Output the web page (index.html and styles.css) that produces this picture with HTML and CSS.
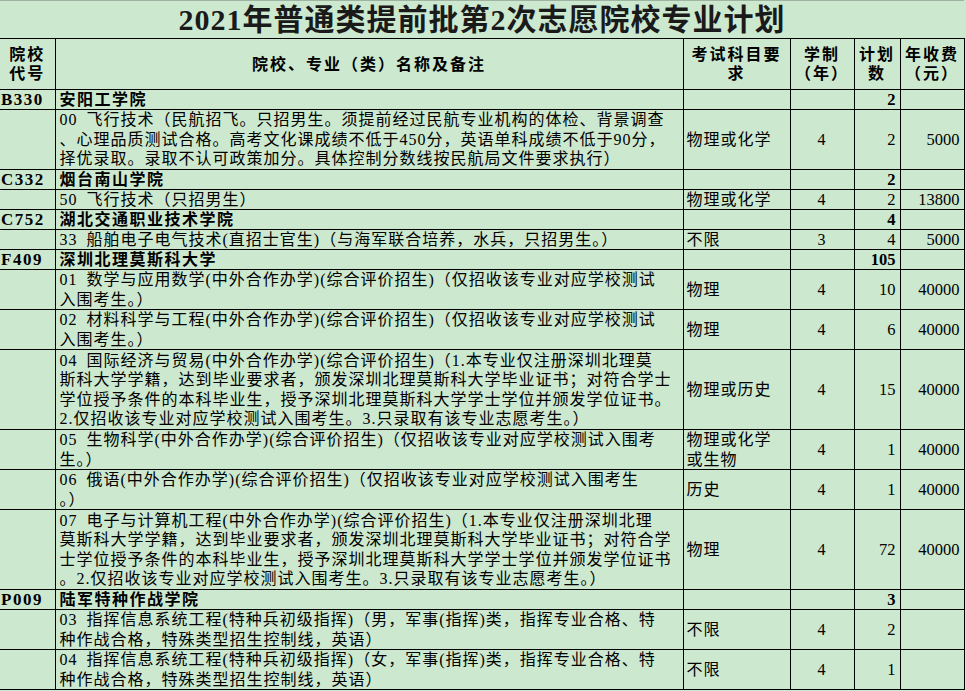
FILE: index.html
```html
<!DOCTYPE html>
<html lang="zh-CN">
<head>
<meta charset="utf-8">
<title>2021年普通类提前批第2次志愿院校专业计划</title>
<link rel="stylesheet" href="styles.css">
</head>
<body>
<table class="plan">
  <colgroup>
    <col class="c-code"><col class="c-name"><col class="c-subj"><col class="c-yr"><col class="c-plan"><col class="c-fee">
  </colgroup>
  <tr class="title-row"><td class="title" colspan="6">2021年普通类提前批第2次志愿院校专业计划</td></tr>
  <tr class="head-row">
    <th class="code">院校<br>代号</th>
    <th>院校、专业（类）名称及备注</th>
    <th>考试科目要<br>求</th>
    <th>学制<br>（年）</th>
    <th>计划<br>数</th>
    <th>年收费<br>（元）</th>
  </tr>

  <tr class="group h1"><td class="code">B330</td><td class="name">安阳工学院</td><td class="subj"></td><td class="yr"></td><td class="num">2</td><td class="num"></td></tr>
  <tr class="h3"><td class="code"></td><td class="name">00&ensp;飞行技术（民航招飞。只招男生。须提前经过民航专业机构的体检、背景调查<br>、心理品质测试合格。高考文化课成绩不低于450分，英语单科成绩不低于90分，<br>择优录取。录取不认可政策加分。具体控制分数线按民航局文件要求执行）</td><td class="subj">物理或化学</td><td class="yr">4</td><td class="num">2</td><td class="num">5000</td></tr>

  <tr class="group h1"><td class="code">C332</td><td class="name">烟台南山学院</td><td class="subj"></td><td class="yr"></td><td class="num">2</td><td class="num"></td></tr>
  <tr class="h1"><td class="code"></td><td class="name">50&ensp;飞行技术（只招男生）</td><td class="subj">物理或化学</td><td class="yr">4</td><td class="num">2</td><td class="num">13800</td></tr>

  <tr class="group h1"><td class="code">C752</td><td class="name">湖北交通职业技术学院</td><td class="subj"></td><td class="yr"></td><td class="num">4</td><td class="num"></td></tr>
  <tr class="h1"><td class="code"></td><td class="name">33&ensp;船舶电子电气技术(直招士官生)（与海军联合培养，水兵，只招男生。）</td><td class="subj">不限</td><td class="yr">3</td><td class="num">4</td><td class="num">5000</td></tr>

  <tr class="group h1"><td class="code">F409</td><td class="name">深圳北理莫斯科大学</td><td class="subj"></td><td class="yr"></td><td class="num">105</td><td class="num"></td></tr>
  <tr class="h2"><td class="code"></td><td class="name">01&ensp;数学与应用数学(中外合作办学)(综合评价招生)（仅招收该专业对应学校测试<br>入围考生。）</td><td class="subj">物理</td><td class="yr">4</td><td class="num">10</td><td class="num">40000</td></tr>
  <tr class="h2"><td class="code"></td><td class="name">02&ensp;材料科学与工程(中外合作办学)(综合评价招生)（仅招收该专业对应学校测试<br>入围考生。）</td><td class="subj">物理</td><td class="yr">4</td><td class="num">6</td><td class="num">40000</td></tr>
  <tr class="h4"><td class="code"></td><td class="name">04&ensp;国际经济与贸易(中外合作办学)(综合评价招生)（1.本专业仅注册深圳北理莫<br>斯科大学学籍，达到毕业要求者，颁发深圳北理莫斯科大学毕业证书；对符合学士<br>学位授予条件的本科毕业生，授予深圳北理莫斯科大学学士学位并颁发学位证书。<br>2.仅招收该专业对应学校测试入围考生。3.只录取有该专业志愿考生。）</td><td class="subj">物理或历史</td><td class="yr">4</td><td class="num">15</td><td class="num">40000</td></tr>
  <tr class="h2"><td class="code"></td><td class="name">05&ensp;生物科学(中外合作办学)(综合评价招生)（仅招收该专业对应学校测试入围考<br>生。）</td><td class="subj">物理或化学<br>或生物</td><td class="yr">4</td><td class="num">1</td><td class="num">40000</td></tr>
  <tr class="h2"><td class="code"></td><td class="name">06&ensp;俄语(中外合作办学)(综合评价招生)（仅招收该专业对应学校测试入围考生<br>。）</td><td class="subj">历史</td><td class="yr">4</td><td class="num">1</td><td class="num">40000</td></tr>
  <tr class="h4"><td class="code"></td><td class="name">07&ensp;电子与计算机工程(中外合作办学)(综合评价招生)（1.本专业仅注册深圳北理<br>莫斯科大学学籍，达到毕业要求者，颁发深圳北理莫斯科大学毕业证书；对符合学<br>士学位授予条件的本科毕业生，授予深圳北理莫斯科大学学士学位并颁发学位证书<br>。2.仅招收该专业对应学校测试入围考生。3.只录取有该专业志愿考生。）</td><td class="subj">物理</td><td class="yr">4</td><td class="num">72</td><td class="num">40000</td></tr>

  <tr class="group h1"><td class="code">P009</td><td class="name">陆军特种作战学院</td><td class="subj"></td><td class="yr"></td><td class="num">3</td><td class="num"></td></tr>
  <tr class="h2"><td class="code"></td><td class="name">03&ensp;指挥信息系统工程(特种兵初级指挥)（男，军事(指挥)类，指挥专业合格、特<br>种作战合格，特殊类型招生控制线，英语）</td><td class="subj">不限</td><td class="yr">4</td><td class="num">2</td><td class="num"></td></tr>
  <tr class="h2"><td class="code"></td><td class="name">04&ensp;指挥信息系统工程(特种兵初级指挥)（女，军事(指挥)类，指挥专业合格、特<br>种作战合格，特殊类型招生控制线，英语）</td><td class="subj">不限</td><td class="yr">4</td><td class="num">1</td><td class="num"></td></tr>
</table>
</body>
</html>
```

FILE: styles.css
```css
html, body {
  margin: 0;
  padding: 0;
  background: #cce8cf;
}

body {
  font-family: "Liberation Serif", "Noto Sans CJK SC", serif;
  color: #000;
}

.plan {
  border-collapse: collapse;
  table-layout: fixed;
  width: 964px;
}

.c-code { width: 55px; }
.c-name { width: 628px; }
.c-subj { width: 107px; }
.c-yr   { width: 64px; }
.c-plan { width: 46px; }
.c-fee  { width: 64px; }

.plan td,
.plan th {
  border: 1px solid #000;
  padding: 0 4px;
  font-size: 16px;
  line-height: 19px;
  letter-spacing: 1px;
  white-space: nowrap;
  overflow: hidden;
  vertical-align: middle;
  font-weight: normal;
}

.plan td.code,
.plan th.code {
  border-left: none;
  padding-left: 1px;
  padding-right: 0;
}

.title-row { height: 38px; }

.plan td.title {
  border: none;
  border-top: 1px solid #9fb3a2;
  font-size: 30px;
  line-height: 36px;
  letter-spacing: 1px;
  text-align: center;
  font-weight: 600;
  color: #1a1a1a;
}

.head-row { height: 51px; }

.plan th {
  font-weight: bold;
  text-align: center;
  letter-spacing: 2px;
  line-height: 19px;
  padding: 0 2px;
}

.plan th.code {
  text-align: center;
  padding: 0;
}

.h1 { height: 20px; }
.h2 { height: 40px; }
.h3 { height: 60px; }
.h4 { height: 80px; }

.h2 td, .h3 td, .h4 td { line-height: 19.5px; }

.plan td.name { padding-left: 4px; }
.plan td.subj { padding-left: 3px; }
.plan td.yr   { text-align: center; }
.plan td.num  { text-align: right; padding-right: 4px; letter-spacing: 0; font-size: 16.5px; }

.group td {
  font-weight: bold;
  line-height: 18px;
}

.group td.code {
  font-size: 17px;
  letter-spacing: 1.5px;
}

.group td.name {
  letter-spacing: 1.5px;
}
```
